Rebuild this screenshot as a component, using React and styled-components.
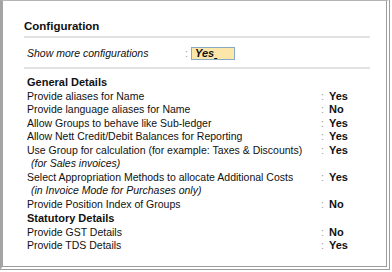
import React from "react";
import styled, { createGlobalStyle } from "styled-components";

const Global = createGlobalStyle`
  html, body { margin: 0; padding: 0; background: #ffffff; }
  body { font-family: "Liberation Sans", Arial, sans-serif; color: #111; }
`;

const Frame = styled.div`
  box-sizing: border-box;
  width: 390px;
  height: 270px;
  border-left: 3px solid #a4a4a4;
  border-top: 1px solid #b4b4b4;
  border-right: 4px double #9c9c9c;
  border-bottom: 4px double #9c9c9c;
  padding: 19px 16px 0 21px;
  display: flex;
  flex-direction: column;
  font-size: 10.5px;
  line-height: 13.5px;
`;

const Header = styled.div`
  font-weight: bold;
  font-size: 11.5px;
  padding: 0 0 2px 0;
  border-bottom: 2px solid #e2e2e2;
`;

const ShowRow = styled.div`
  display: grid;
  grid-template-columns: 158px 6px auto;
  align-items: center;
  padding: 9px 0 7px 3px;
  border-bottom: 2px solid #e2e2e2;
`;

const Italic = styled.span`
  font-style: italic;
`;

const Colon = styled.span`
  color: #9a9a9a;
`;

const Field = styled.span`
  box-sizing: border-box;
  width: 44px;
  height: 13px;
  background: #fde6a9;
  border: 1px solid #86a9c6;
  font-weight: bold;
  font-style: italic;
  font-size: 11px;
  line-height: 11px;
  padding-left: 3px;
`;

const Section = styled.div`
  display: grid;
  grid-template-columns: 294px 8px auto;
  padding-left: 3px;
  margin-top: ${(p) => p.$mt}px;
`;

const Title = styled.div`
  grid-column: 1 / -1;
  font-weight: bold;
  font-size: 11px;
`;

const Label = styled.div`
  font-style: ${(p) => (p.$note ? "italic" : "normal")};
  padding-left: ${(p) => (p.$note ? 4 : 0)}px;
  grid-column: ${(p) => (p.$note ? "1 / -1" : "auto")};
  white-space: nowrap;
`;

const Value = styled.div`
  font-weight: bold;
  font-size: 11px;
`;

const general = [
  ["Provide aliases for Name", "Yes"],
  ["Provide language aliases for Name", "No"],
  ["Allow Groups to behave like Sub-ledger", "Yes"],
  ["Allow Nett Credit/Debit Balances for Reporting", "Yes"],
  ["Use Group for calculation (for example: Taxes & Discounts)", "Yes"],
  ["(for Sales invoices)", null],
  ["Select Appropriation Methods to allocate Additional Costs", "Yes"],
  ["(in Invoice Mode for Purchases only)", null],
  ["Provide Position Index of Groups", "No"],
];

const statutory = [
  ["Provide GST Details", "No"],
  ["Provide TDS Details", "Yes"],
];

function Rows({ items }) {
  return items.map(([label, value], i) =>
    value === null ? (
      <Label key={i} $note>
        {label}
      </Label>
    ) : (
      <React.Fragment key={i}>
        <Label>{label}</Label>
        <Colon>:</Colon>
        <Value>{value}</Value>
      </React.Fragment>
    )
  );
}

export default function App() {
  return (
    <>
      <Global />
      <Frame>
        <Header>Configuration</Header>
        <ShowRow>
          <Italic>Show more configurations</Italic>
          <Colon>:</Colon>
          <Field>
            Yes<u>&nbsp;</u>
          </Field>
        </ShowRow>
        <Section $mt={7}>
          <Title>General Details</Title>
          <Rows items={general} />
        </Section>
        <Section $mt={1}>
          <Title>Statutory Details</Title>
          <Rows items={statutory} />
        </Section>
      </Frame>
    </>
  );
}
